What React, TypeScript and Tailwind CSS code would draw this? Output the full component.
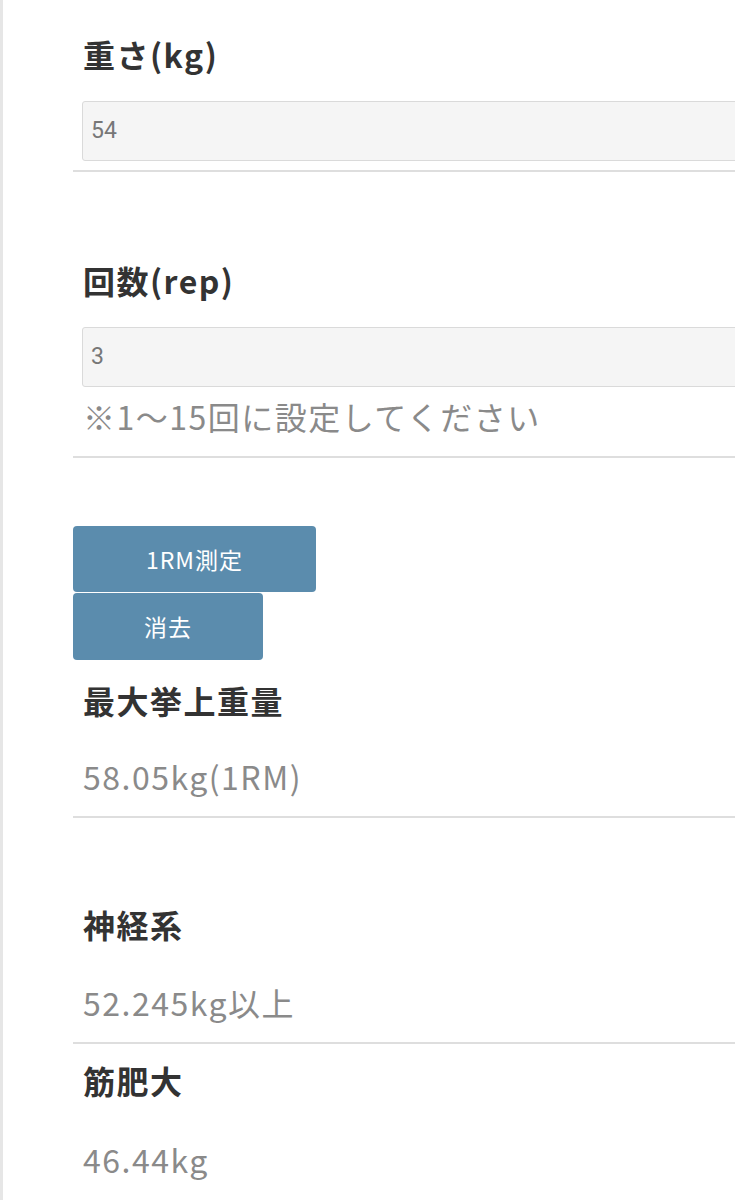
const font = { fontFamily: '"Noto Sans CJK JP", "Noto Sans", sans-serif' }

function Field({ label, value }: { label: string; value: string }) {
  return (
    <>
      <div className="pl-[10px] text-[32px] leading-[40px] font-bold tracking-[1.5px] text-[#333]">{label}</div>
      <div className="ml-[9px] mt-[27px] flex h-[60px] w-[700px] items-center rounded-[3px] border border-[#dadada] bg-[#f5f5f5] pl-[8px] font-['Roboto'] text-[23px] text-[#777]">
        {value}
      </div>
    </>
  )
}

export default function App() {
  return (
    <div className="h-[1200px] w-[735px] overflow-hidden bg-white" style={font}>
      <div className="flex h-full border-l-[3px] border-[#e6e6e6]">
        <div className="ml-[70px] flex-1">
          <div className="border-b-2 border-[#dedede] pt-[34px] pb-[9px]">
            <Field label="重さ(kg)" value="54" />
          </div>

          <div className="border-b-2 border-[#dedede] pt-[88px] pb-[20px]">
            <Field label="回数(rep)" value="3" />
            <div className="mt-[9px] pl-[10px] text-[32px] leading-[40px] tracking-[1.5px] text-[#8a8a8a]">
              ※1〜15回に設定してください
            </div>
          </div>

          <div className="mt-[68px] flex flex-col items-start gap-px">
            <button className="flex h-[66px] w-[243px] items-center justify-center rounded-[4px] bg-[#5b8cad] text-[23px] tracking-[1px] text-white">
              1RM測定
            </button>
            <button className="flex h-[67px] w-[190px] items-center justify-center rounded-[4px] bg-[#5b8cad] text-[23px] tracking-[1px] text-white">
              消去
            </button>
          </div>

          <div className="border-b-2 border-[#dedede] pt-[20px] pb-[20px]">
            <div className="pl-[10px] text-[32px] leading-[40px] font-bold tracking-[1.5px] text-[#333]">最大挙上重量</div>
            <div className="mt-[36px] pl-[10px] text-[32px] leading-[40px] tracking-[1.5px] text-[#8a8a8a]">58.05kg(1RM)</div>
          </div>

          <div className="border-b-2 border-[#dedede] pt-[86px] pb-[20px]">
            <div className="pl-[10px] text-[32px] leading-[40px] font-bold tracking-[1.5px] text-[#333]">神経系</div>
            <div className="mt-[38px] pl-[10px] text-[32px] leading-[40px] tracking-[1.5px] text-[#8a8a8a]">52.245kg以上</div>
          </div>

          <div className="pt-[16px]">
            <div className="pl-[10px] text-[32px] leading-[40px] font-bold tracking-[1.5px] text-[#333]">筋肥大</div>
            <div className="mt-[39px] pl-[10px] text-[32px] leading-[40px] tracking-[1.5px] text-[#8a8a8a]">46.44kg</div>
          </div>
        </div>
      </div>
    </div>
  )
}
